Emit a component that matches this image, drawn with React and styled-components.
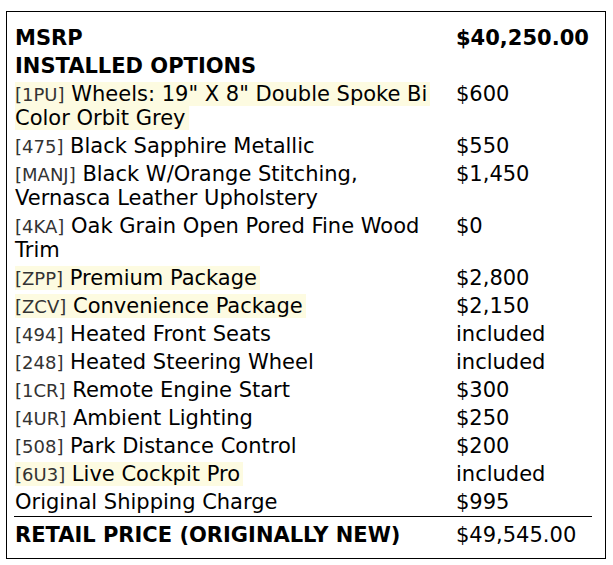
import React from "react";
import styled, { createGlobalStyle } from "styled-components";

const Global = createGlobalStyle`
  html, body { margin: 0; padding: 0; background: #fff; }
  body { font-family: "DejaVu Sans", Verdana, sans-serif; color: #000; }
`;

const Page = styled.div`
  padding: 11px 7px 6px 6px;
`;

const Box = styled.div`
  width: 600px;
  box-sizing: border-box;
  border: 1px solid #000;
  padding: 12px 13px 9px 7px;
`;

const Table = styled.div`
  display: grid;
  grid-template-columns: 442px 1fr;
`;

const Cell = styled.div`
  font-size: 21px;
  line-height: 24px;
  padding: ${(p) => (p.$total ? "6px 0 2px" : "2px 0")};
  padding-left: ${(p) => (p.$left ? "1px" : "0")};
  padding-right: ${(p) => (p.$left ? "4px" : "0")};
  font-weight: ${(p) => (p.$bold ? 700 : 400)};
  border-top: ${(p) => (p.$total ? "1px solid #000" : "none")};
  white-space: ${(p) => (p.$left ? "normal" : "nowrap")};
`;

const Mark = styled.span`
  background: ${(p) => (p.$hl ? "#fdfbe1" : "transparent")};
  padding-right: 3px;
  -webkit-box-decoration-break: clone;
  box-decoration-break: clone;
`;

const Code = styled.span`
  font-size: 18px;
  line-height: 1;
  color: #333;
`;

const rows = [
  { code: "1PU", name: 'Wheels: 19" X 8" Double Spoke Bi Color Orbit Grey', price: "$600", hl: true },
  { code: "475", name: "Black Sapphire Metallic", price: "$550" },
  { code: "MANJ", name: "Black W/Orange Stitching, Vernasca Leather Upholstery", price: "$1,450" },
  { code: "4KA", name: "Oak Grain Open Pored Fine Wood Trim", price: "$0" },
  { code: "ZPP", name: "Premium Package", price: "$2,800", hl: true },
  { code: "ZCV", name: "Convenience Package", price: "$2,150", hl: true },
  { code: "494", name: "Heated Front Seats", price: "included" },
  { code: "248", name: "Heated Steering Wheel", price: "included" },
  { code: "1CR", name: "Remote Engine Start", price: "$300" },
  { code: "4UR", name: "Ambient Lighting", price: "$250" },
  { code: "508", name: "Park Distance Control", price: "$200" },
  { code: "6U3", name: "Live Cockpit Pro", price: "included", hl: true },
];

export default function App() {
  return (
    <>
      <Global />
      <Page>
        <Box>
          <Table>
            <Cell $left $bold>MSRP</Cell>
            <Cell $bold>$40,250.00</Cell>
            <Cell $left $bold>INSTALLED OPTIONS</Cell>
            <Cell />
            {rows.map((r) => (
              <React.Fragment key={r.code}>
                <Cell $left>
                  <Mark $hl={r.hl}>
                    <Code>[{r.code}]</Code> {r.name}
                  </Mark>
                </Cell>
                <Cell>{r.price}</Cell>
              </React.Fragment>
            ))}
            <Cell $left>Original Shipping Charge</Cell>
            <Cell>$995</Cell>
            <Cell $left $bold $total>RETAIL PRICE (ORIGINALLY NEW)</Cell>
            <Cell $total>$49,545.00</Cell>
          </Table>
        </Box>
      </Page>
    </>
  );
}
